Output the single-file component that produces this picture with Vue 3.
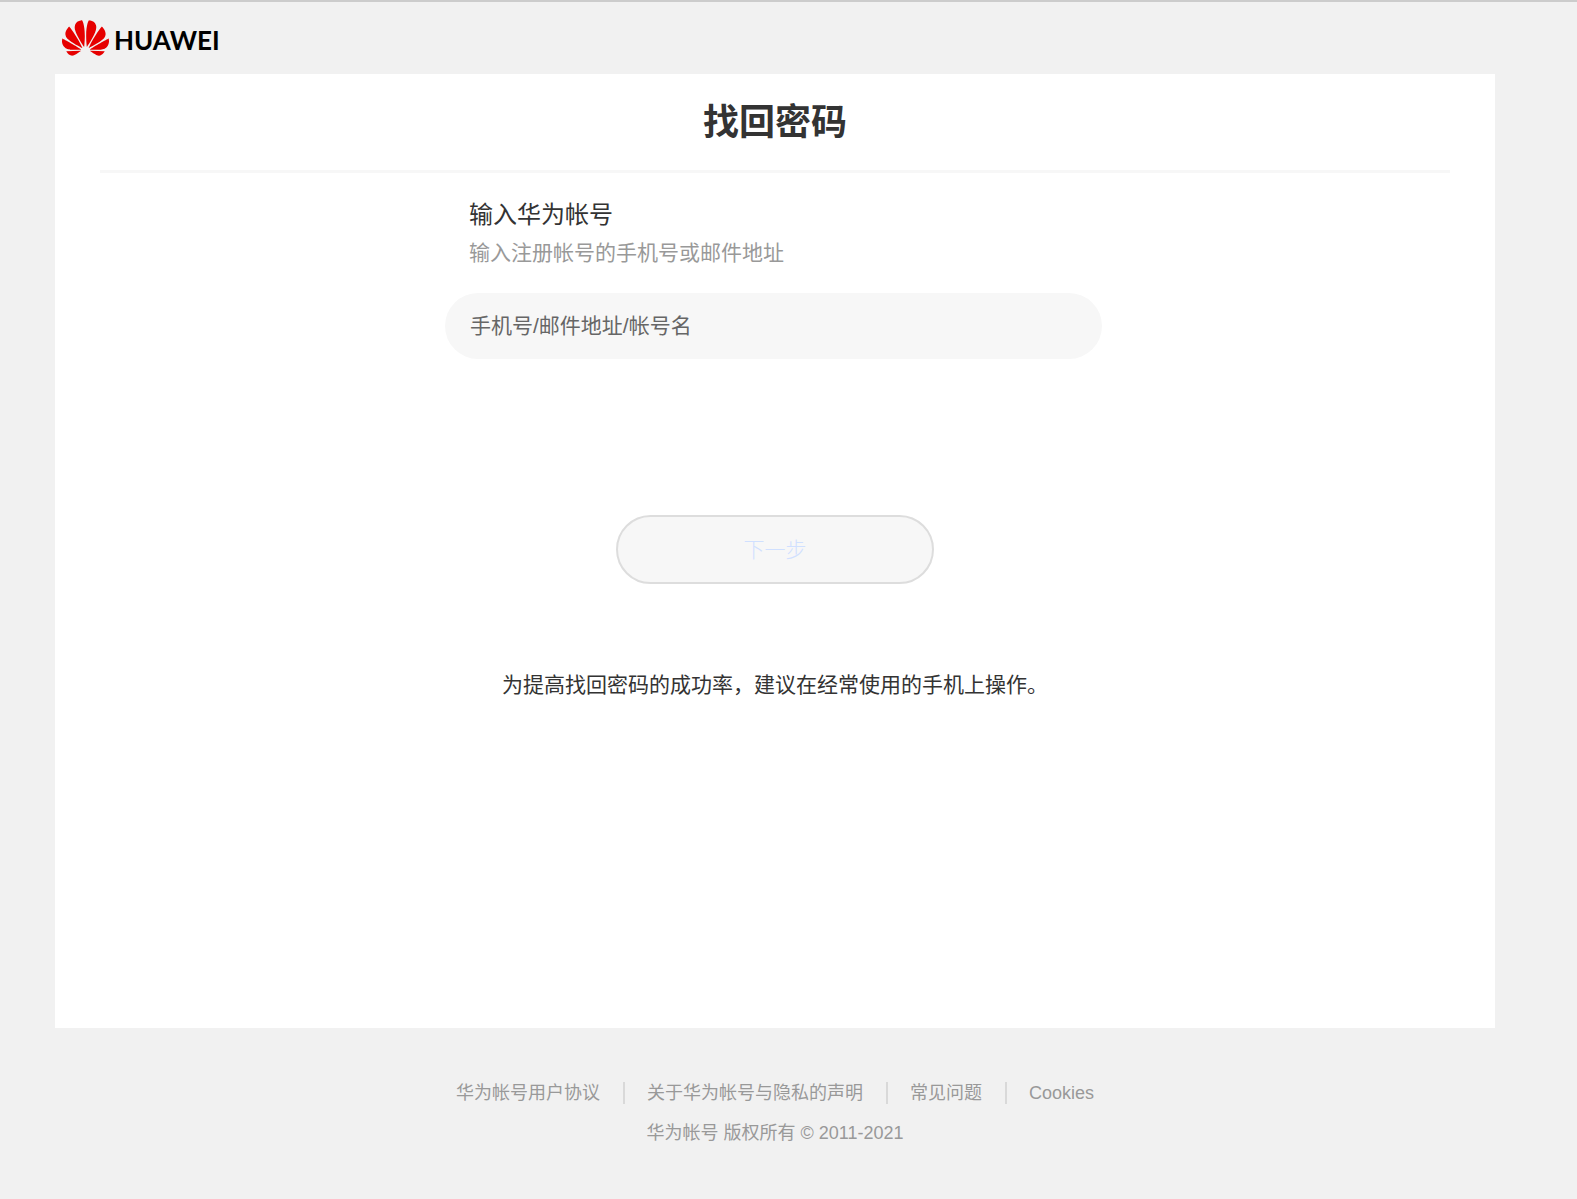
<script setup>
import { ref } from 'vue'

const account = ref('')
const links = ['华为帐号用户协议', '关于华为帐号与隐私的声明', '常见问题', 'Cookies']
</script>

<template>
  <div class="page">
    <header class="header">
      <a class="brand" href="#">
        <svg class="flower" viewBox="0 3 24 18" aria-hidden="true">
          <path fill="#e60000" d="M3.67 6.14S1.82 7.91 1.72 9.78v.35c.08 1.51 1.22 2.4 1.22 2.4 1.83 1.79 6.26 4.04 7.3 4.55 0 0 .06.03.1-.01l.02-.04v-.04C7.52 10.8 3.67 6.14 3.67 6.14zM9.65 18.6c-.02-.08-.1-.08-.1-.08l-7.38.26c.8 1.43 2.15 2.53 3.56 2.2.96-.25 3.16-1.78 3.88-2.3.06-.05.04-.09.04-.09zm.08-.78C6.49 15.63.21 12.28.21 12.28c-.15.46-.2.9-.21 1.3v.07c0 1.07.4 1.82.4 1.82.8 1.69 2.34 2.2 2.34 2.2.7.3 1.4.31 1.4.31.12.02 4.4 0 5.54 0 .05 0 .08-.05.08-.05v-.06c0-.03-.03-.05-.03-.05zM9.06 3.19a3.42 3.42 0 00-2.57 3.15v.41c.03.6.16 1.05.16 1.05.66 2.9 3.86 7.65 4.55 8.65.05.05.1.03.1.03a.1.1 0 00.06-.1c1.06-10.6-1.11-13.42-1.11-13.42-.32.02-1.19.23-1.19.23zm8.299 2.27s-.49-1.8-2.44-2.28c0 0-.57-.14-1.17-.22 0 0-2.18 2.81-1.12 13.43.01.07.06.08.06.08.07.03.1-.03.1-.03.72-1.03 3.9-5.76 4.55-8.64 0 0 .36-1.4.02-2.34zm-2.92 13.07s-.07 0-.09.05c0 0-.01.07.03.1.7.51 2.85 2 3.88 2.3 0 0 .16.05.43.06h.14c.69-.02 1.9-.37 3-2.26l-7.4-.25zm7.83-8.41c.14-2.06-1.94-3.97-1.94-3.98 0 0-3.85 4.66-6.67 10.8 0 0-.03.08.02.13l.04.01h.06c1.06-.53 5.46-2.77 7.28-4.54 0 0 1.15-.93 1.21-2.42zm1.52 2.14s-6.28 3.37-9.52 5.55c0 0-.05.04-.03.11 0 0 .03.06.07.06 1.16 0 5.56 0 5.67-.02 0 0 .57-.02 1.27-.29 0 0 1.56-.5 2.37-2.27 0 0 .73-1.45.17-3.14z" />
        </svg>
        <span class="wordmark">HUAWEI</span>
      </a>
    </header>

    <main class="panel">
      <h1 class="title">找回密码</h1>
      <form class="form" @submit.prevent>
        <div class="intro">
          <label class="heading" for="account">输入华为帐号</label>
          <p class="hint">输入注册帐号的手机号或邮件地址</p>
        </div>
        <input id="account" v-model="account" class="field" type="text" placeholder="手机号/邮件地址/帐号名" />
        <button class="next" type="submit" disabled>下一步</button>
      </form>
      <p class="note">为提高找回密码的成功率，建议在经常使用的手机上操作。</p>
    </main>

    <footer class="footer">
      <nav class="links">
        <a v-for="link in links" :key="link" class="link" href="#">{{ link }}</a>
      </nav>
      <p class="copyright">华为帐号 版权所有 © 2011-2021</p>
    </footer>
  </div>
</template>

<style>
body {
  background: #f1f1f1;
}
</style>

<style scoped>
.page {
  box-sizing: border-box;
  min-height: 100vh;
  padding: 0 82px 0 55px;
  border-top: 2px solid #ccc;
  background: #f1f1f1;
  color: #333;
  font-family: "Liberation Sans", "Noto Sans CJK SC", sans-serif;
}

.header {
  display: flex;
  align-items: center;
  height: 72px;
  padding-left: 7px;
}

.brand {
  display: flex;
  align-items: center;
  gap: 5px;
  color: #000;
  text-decoration: none;
}

.flower {
  width: 47px;
  height: 36px;
}

.wordmark {
  padding-top: 4px;
  font: 700 26px/32px Lato, sans-serif;
}

.panel {
  box-sizing: border-box;
  min-height: calc(100vh - 245px);
  padding: 0 45px;
  background: #fff;
}

.title {
  margin: 0;
  border-bottom: 3px solid #f7f7f7;
  font-size: 36px;
  font-weight: 700;
  line-height: 94px;
  padding-top: 2px;
  text-align: center;
}

.form {
  display: flex;
  flex-direction: column;
  max-width: 660px;
  margin: 0 auto;
  padding-top: 24px;
}

.intro {
  padding: 0 24px;
}

.heading {
  display: block;
  font-size: 24px;
  line-height: 36px;
}

.hint {
  margin: 0;
  color: #999;
  font-size: 21px;
  line-height: 40px;
}

.field {
  box-sizing: border-box;
  width: 100%;
  max-width: 657px;
  height: 66px;
  margin-top: 20px;
  padding: 0 25px;
  border: 0;
  border-radius: 33px;
  background: #f7f7f7;
  color: #333;
  font: inherit;
  font-size: 21px;
}

.field::placeholder {
  color: #666;
  opacity: 1;
}

.next {
  width: 318px;
  height: 69px;
  margin: 156px auto 0;
  padding: 0 0 4px;
  border: 2px solid #ddd;
  border-radius: 35px;
  background: #f7f7f7;
  color: #d0e0ff;
  font: inherit;
  font-size: 21px;
  font-weight: 300;
}

.note {
  margin: 84px 0 0;
  font-size: 21px;
  line-height: 34px;
  text-align: center;
}

.footer {
  padding-top: 45px;
  color: #999;
  font-size: 18px;
  line-height: 40px;
  text-align: center;
}

.links {
  display: flex;
  justify-content: center;
  align-items: center;
}

.link {
  display: flex;
  align-items: center;
  color: #999;
  text-decoration: none;
}

.link + .link::before {
  content: "";
  width: 2px;
  height: 22px;
  margin: 0 22px 0 23px;
  background: #d9d9d9;
}

.copyright {
  margin: 0;
}
</style>
